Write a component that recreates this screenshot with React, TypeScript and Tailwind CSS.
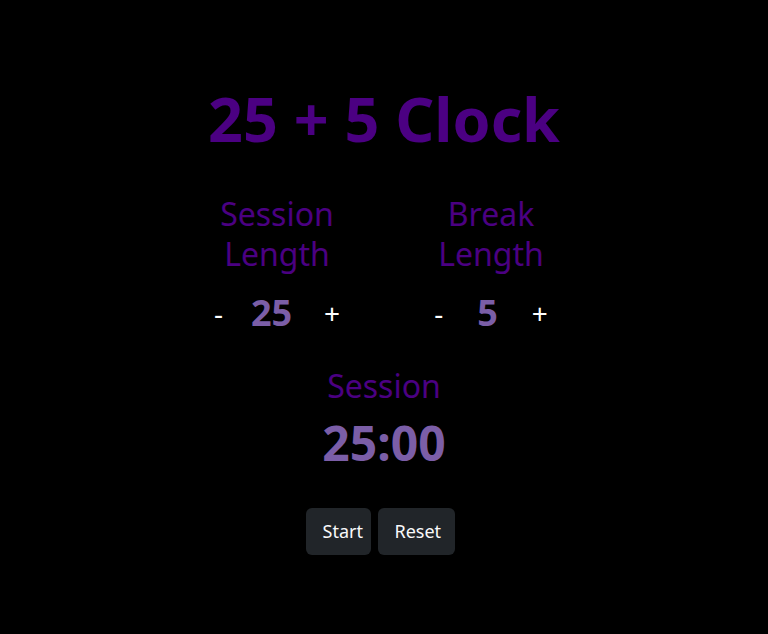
import React, { useState } from 'react';

const font = { fontFamily: '"Noto Sans", "Open Sans", sans-serif' };

function LengthControl({
  label,
  value,
  rowClass,
  plusClass,
  onDec,
  onInc,
}: {
  label: string;
  value: number;
  rowClass: string;
  plusClass: string;
  onDec: () => void;
  onInc: () => void;
}) {
  return (
    <div className="flex flex-col items-center w-[150px]">
      <h2 className="text-[32px] leading-[40px] text-center text-[#4b0082]">{label}</h2>
      <div className={`flex items-center mt-[17px] h-[44px] ${rowClass}`}>
        <button onClick={onDec} className="text-[28px] leading-[44px] text-white">-</button>
        <span className="text-[36px] leading-[44px] font-bold text-[#7b5ea7]">{value}</span>
        <button onClick={onInc} className={`text-[28px] leading-[44px] text-white ${plusClass}`}>+</button>
      </div>
    </div>
  );
}

export default function App() {
  const [session, setSession] = useState(25);
  const [brk, setBrk] = useState(5);

  return (
    <div className="min-h-[634px] bg-black flex flex-col items-center pt-[80px]" style={font}>
      <h1 className="text-[61px] leading-[77px] font-bold text-[#4b0082]">25 + 5 Clock</h1>

      <div className="flex gap-[64px] mt-[37px]">
        <LengthControl
          label="Session Length"
          value={session}
          rowClass="gap-[28px]"
          plusClass="ml-[4px]"
          onDec={() => setSession(Math.max(1, session - 1))}
          onInc={() => setSession(Math.min(60, session + 1))}
        />
        <LengthControl
          label="Break Length"
          value={brk}
          rowClass="gap-[34px]"
          plusClass=""
          onDec={() => setBrk(Math.max(1, brk - 1))}
          onInc={() => setBrk(Math.min(60, brk + 1))}
        />
      </div>

      <h2 className="mt-[31px] text-[32px] leading-[40px] text-[#4b0082]">Session</h2>
      <div className="mt-[9px] text-[48px] leading-[56px] font-bold text-[#7b5ea7]">
        {String(session).padStart(2, '0')}:00
      </div>

      <div className="flex gap-[7px] mt-[37px] ml-[-8px]">
        <button className="w-[65px] h-[47px] pl-[17px] text-left rounded-md bg-[#212529] text-[18px] text-[#f8f9fa]">Start</button>
        <button className="w-[77px] h-[47px] pl-[17px] text-left rounded-md bg-[#212529] text-[18px] text-[#f8f9fa]">Reset</button>
      </div>
    </div>
  );
}
